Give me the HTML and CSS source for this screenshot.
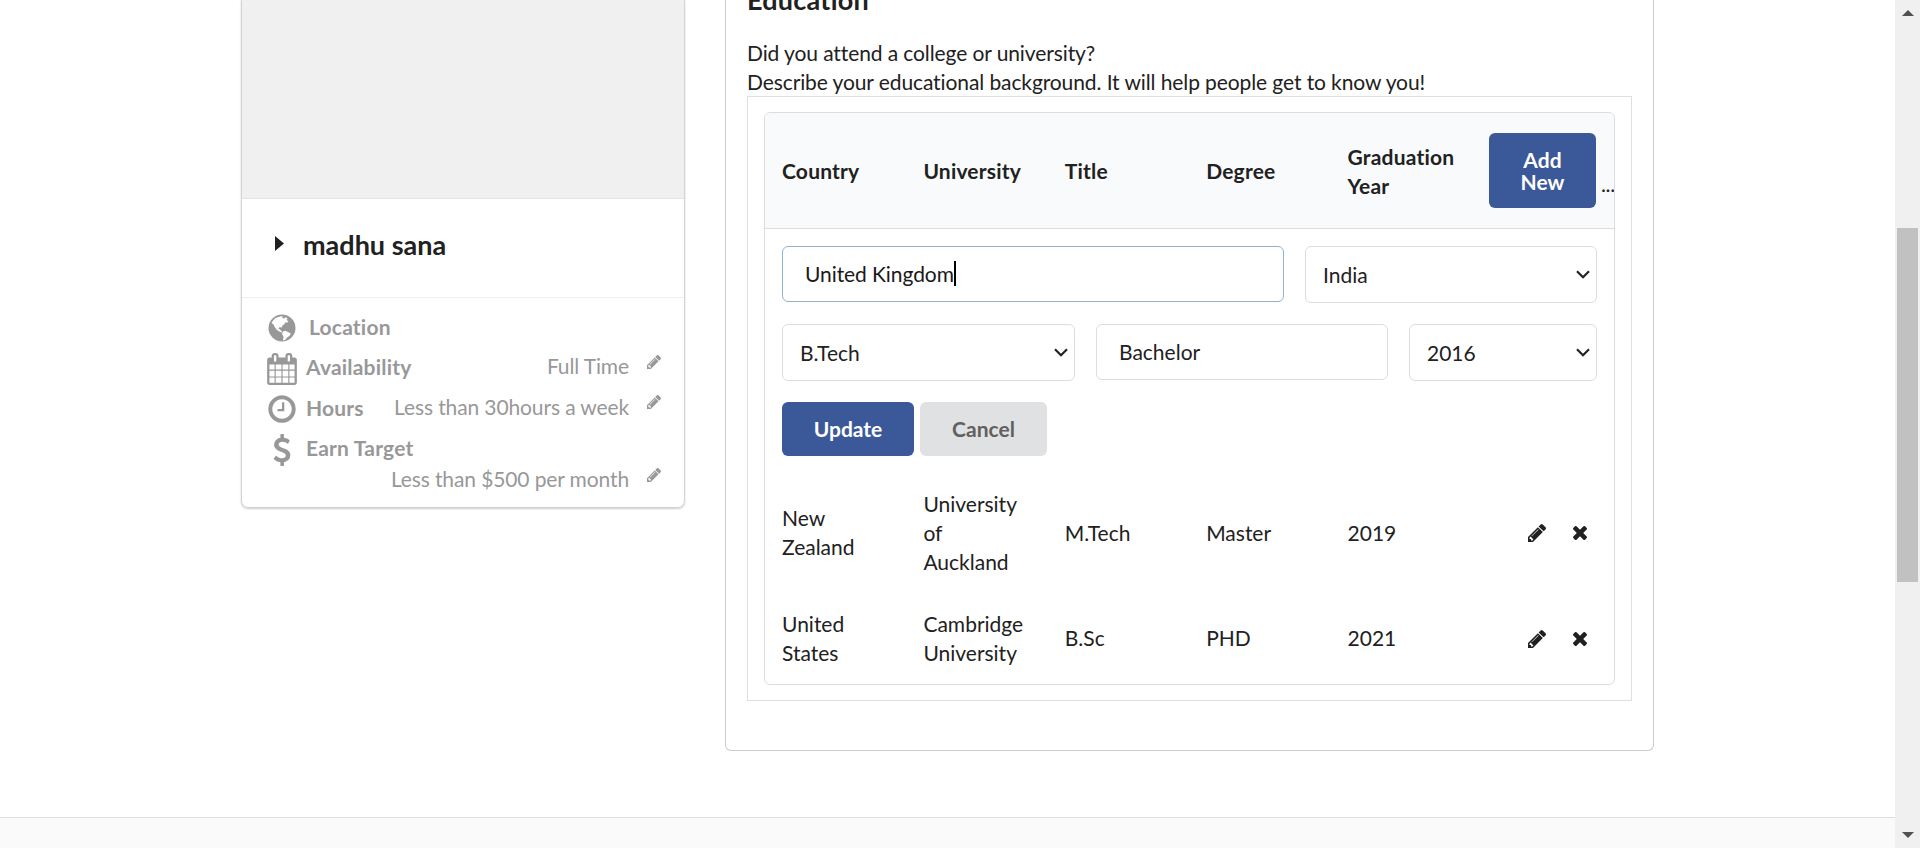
FILE: index.html
```html
<!DOCTYPE html>
<html lang="en">
<head>
<meta charset="utf-8">
<title>Profile</title>
<link rel="stylesheet" href="styles.css">
</head>
<body>
<svg class="defs" aria-hidden="true">
  <symbol id="pencil" viewBox="128 149 1515 1515"><path d="M491 1536l91-91-235-235-91 91v107h128v128h107zm523-928q0-22-22-22-10 0-17 7l-542 542q-7 7-7 17 0 22 22 22 10 0 17-7l542-542q7-7 7-17zm-54-192l416 416-832 832h-416v-416zm683 96q0 53-37 90l-166 166-416-416 166-165q36-38 90-38 53 0 91 38l235 234q37 39 37 91z"/></symbol>
  <symbol id="times" viewBox="302 366 1188 1188"><path d="M1490 1322q0 40-28 68l-136 136q-28 28-68 28t-68-28l-294-294-294 294q-28 28-68 28t-68-28l-136-136q-28-28-28-68t28-68l294-294-294-294q-28-28-28-68t28-68l136-136q28-28 68-28t68 28l294 294 294-294q28-28 68-28t68 28l136 136q28 28 28 68t-28 68l-294 294 294 294q28 28 28 68z"/></symbol>
  <symbol id="chevron" viewBox="0 0 14 9"><path d="M1 1.2 7 7.2 13 1.2" fill="none" stroke="#222" stroke-width="2.2"/></symbol>
</svg>
<div class="page">
  <div class="view">
    <div class="columns">
      <aside class="card">
        <div class="photo"></div>
        <div class="name"><svg class="caret" viewBox="0 0 9 15"><path d="M0 0 9 7.5 0 15z"/></svg><span>madhu sana</span></div>
        <div class="facts">
          <div class="fact first">
            <svg class="ic" viewBox="0 0 32 32"><circle cx="16" cy="16" r="13.5"/><path class="land" d="M7.500 8 9.500 6 12.500 5 15 4.300 17.500 4.700 15.800 6 18 6.500 19.500 5.300 21.500 6.300 20.800 8 22.500 9.500 20.800 10.800 19.300 10.300 18.500 12 16.500 13.500 15.500 15.800 13.800 15 12.500 16.500 13.800 17.500 15.300 18.800 16.500 20.800 14.200 20 11 18 9 15.500 7.500 12.500 5.500 10.800z"/><path class="land" d="M17.200 19.300 19.500 18.800 22 20 24.800 21.400 23.600 23.800 21.200 25.500 19 28 17 28.400 17.600 24.800 16 22z"/></svg>
            <b>Location</b>
          </div>
          <div class="fact">
            <svg class="ic" viewBox="0 0 1792 1792"><path d="M192 1664h288v-288h-288v288zm352 0h320v-288h-320v288zm-352-352h288v-320h-288v320zm352 0h320v-320h-320v320zm-352-384h288v-288h-288v288zm736 736h320v-288h-320v288zm-384-736h320v-288h-320v288zm768 736h288v-288h-288v288zm-384-352h320v-320h-320v320zm-352-864v-288q0-13-9.5-22.5t-22.500-9.500h-64q-13 0-22.500 9.500t-9.500 22.500v288q0 13 9.500 22.500t22.500 9.500h64q13 0 22.500-9.500t9.500-22.500zm736 864h288v-320h-288v320zm-384-384h320v-288h-320v288zm384 0h288v-288h-288v288zm32-480v-288q0-13-9.500-22.500t-22.500-9.500h-64q-13 0-22.500 9.500t-9.500 22.500v288q0 13 9.500 22.500t22.500 9.500h64q13 0 22.500-9.500t9.500-22.500zm384-64v1280q0 52-38 90t-90 38h-1408q-52 0-90-38t-38-90v-1280q0-52 38-90t90-38h128v-96q0-66 47-113t113-47h64q66 0 113 47t47 113v96h384v-96q0-66 47-113t113-47h64q66 0 113 47t47 113v96h128q52 0 90 38t38 90z"/></svg>
            <b>Availability</b><span class="value">Full Time</span><svg class="edit"><use href="#pencil"/></svg>
          </div>
          <div class="fact">
            <svg class="ic" viewBox="0 0 1792 1792"><path d="M1024 544v448q0 14-9 23t-23 9h-320q-14 0-23-9t-9-23v-64q0-14 9-23t23-9h224v-352q0-14 9-23t23-9h64q14 0 23 9t9 23zm416 352q0-148-73-273t-198-198-273-73-273 73-198 198-73 273 73 273 198 198 273 73 273-73 198-198 73-273zm224 0q0 209-103 385.500t-279.500 279.500-385.500 103-385.500-103-279.500-279.500-103-385.500 103-385.500 279.500-279.500 385.500-103 385.500 103 279.500 279.500 103 385.500z"/></svg>
            <b>Hours</b><span class="value">Less than 30hours a week</span><svg class="edit"><use href="#pencil"/></svg>
          </div>
          <div class="fact">
            <svg class="ic" viewBox="0 0 1792 1792"><path d="M1362 1185q0 153-99.500 263.500t-258.500 136.500v175q0 14-9 23t-23 9h-135q-13 0-22.500-9.500t-9.500-22.500v-175q-66-9-127.500-31t-101.500-44.500-74-48-46.500-37.500-17.500-18q-17-21-2-41l103-135q7-10 23-12 15-2 24 9l2 2q113 99 243 125 37 8 74 8 81 0 142.500-43t61.500-122q0-28-15-53t-33.500-42-58.500-37.500-66-32-80-32.500q-39-16-61.500-25t-61.500-26.500-62.500-31-56.500-35.500-53.500-42.500-43.500-49-35.500-58-21-66.500-8.500-78q0-138 98-242t255-134v-180q0-13 9.500-22.500t22.500-9.500h135q14 0 23 9t9 23v176q57 6 110.500 23t87 33.500 63.500 37.500 39 29 15 14q17 18 5 38l-81 146q-8 15-23 16-14 3-27-7-3-3-14.500-12t-39-26.500-58.500-32-74.500-26-85.500-11.500q-95 0-155 43t-60 111q0 26 8.500 48t29.500 41.500 39.500 33 56 31 60.500 27 70 27.500q53 20 81 31.500t76 35 75.500 42.500 62 50 53 63.500 31.500 76.500 13 94z"/></svg>
            <b>Earn Target</b>
          </div>
          <div class="fact extra"><span class="value">Less than $500 per month</span><svg class="edit"><use href="#pencil"/></svg></div>
        </div>
      </aside>

      <main class="panel">
        <h3>Education</h3>
        <p>Did you attend a college or university?<br>Describe your educational background. It will help people get to know you!</p>
        <div class="frame">
          <div class="table">
            <div class="row head">
              <div>Country</div><div>University</div><div>Title</div><div>Degree</div><div>Graduation Year</div>
              <div class="add"><button class="btn primary">Add<br>New</button><span class="dots">...</span></div>
            </div>
            <div class="form">
              <div class="line one">
                <div class="field text focus"><span>United Kingdom</span><i class="cursor"></i></div>
                <div class="field select"><span>India</span><svg><use href="#chevron"/></svg></div>
              </div>
              <div class="line two">
                <div class="field select"><span>B.Tech</span><svg><use href="#chevron"/></svg></div>
                <div class="field text"><span>Bachelor</span></div>
                <div class="field select"><span>2016</span><svg><use href="#chevron"/></svg></div>
              </div>
              <div class="actions"><button class="btn primary">Update</button><button class="btn plain">Cancel</button></div>
            </div>
            <div class="row tall">
              <div>New Zealand</div><div>University of Auckland</div><div>M.Tech</div><div>Master</div><div>2019</div>
              <div class="tools"><svg class="pen"><use href="#pencil"/></svg><svg class="del"><use href="#times"/></svg></div>
            </div>
            <div class="row short">
              <div>United States</div><div>Cambridge University</div><div>B.Sc</div><div>PHD</div><div>2021</div>
              <div class="tools"><svg class="pen"><use href="#pencil"/></svg><svg class="del"><use href="#times"/></svg></div>
            </div>
          </div>
        </div>
      </main>
    </div>
    <footer class="footer"></footer>
  </div>
  <div class="scrollbar">
    <svg class="arrow" viewBox="0 0 12 6"><path d="M0 6 6 0 12 6z"/></svg>
    <div class="thumb"></div>
    <svg class="arrow" viewBox="0 0 12 6"><path d="M0 0 6 6 12 0z"/></svg>
  </div>
</div>
</body>
</html>
```

FILE: styles.css
```css
* { box-sizing: border-box; }
body {
  margin: 0;
  overflow: hidden;
  background: #fff;
  color: #212121;
  font-family: Lato, "Liberation Sans", sans-serif;
  font-size: 21px;
  line-height: 29px;
  font-variant-ligatures: none;
}
svg { display: block; flex: none; fill: currentColor; }
.defs { display: none; }
.page { display: flex; height: 848px; }
.view { flex: 1; display: flex; flex-direction: column; }
.columns { display: flex; align-items: flex-start; height: 817px; padding-left: 241px; gap: 40px; }
.footer { flex: 1; background: #fafafa; border-top: 1px solid #dedede; }

/* Profile card */
.card {
  width: 444px;
  height: 508px;
  border: 1px solid #d4d4d5;
  border-top: 0;
  border-radius: 0 0 7px 7px;
  box-shadow: 0 1px 2px #ccc;
}
.photo { height: 199px; background: #f0f0f0; border-bottom: 1px solid #e4e4e4; }
.name {
  display: flex;
  height: 99px;
  padding: 29px 0 0 33px;
  border-bottom: 1px solid #efefef;
  font-size: 27px;
  font-weight: 700;
  line-height: 34px;
}
.caret { width: 9px; height: 15px; margin: 8px 19px 0 0; }
.facts { color: #989898; padding: 11px 23px 0 24px; }
.fact { display: flex; height: 40.7px; }
.fact b { padding-top: 2.400px; margin-left: 8px; letter-spacing: .2px; }
.fact.first b { padding-top: 3px; margin-left: 11px; }
.ic { width: 32px; height: 32px; margin-top: 3px; }
.land { fill: #fff; }
.value { margin-left: auto; padding-top: 1.500px; letter-spacing: -.12px; }
.edit { width: 14px; height: 14px; margin: 5px 0 0 18px; }
.extra { margin-top: -9px; }

/* Education panel */
.panel {
  width: 929px;
  height: 751px;
  padding: 0 21px;
  border: 1px solid #ccc;
  border-top: 0;
  border-radius: 0 0 6px 6px;
}
h3 { margin: -19px 0 20px; font-size: 27px; line-height: 37px; letter-spacing: .25px; }
p { margin: 0; letter-spacing: -.1px; line-height: 29.2px; }
.frame { height: 605px; padding: 15px 16px; border: 1px solid #dedfe0; }
.table { height: 573px; border: 1px solid #dcddde; border-radius: 6px; overflow: hidden; }
.row { display: grid; grid-template-columns: repeat(6, 141.4px); align-items: center; padding-bottom: 2px; }
.row > div { padding: 0 17px; }
.row > .add, .row > .tools { display: flex; }
.head { height: 116px; padding: 0; background: #f9fafb; border-bottom: 1px solid #dcddde; font-weight: 700; letter-spacing: .2px; line-height: 29.2px; }
.row > .add { align-items: flex-end; padding: 0 0 0 17px; }
.head .btn { width: 107px; height: 75px; flex: none; line-height: 21.500px; }
.dots { margin: 0 0 5px 5px; line-height: 38px; font-weight: 400; letter-spacing: -.3px; }
.btn { padding: 0; border: 0; border-radius: 6px; font: 700 21px/21px Lato, sans-serif; }
.primary { background: #3b5998; color: #fff; }
.plain { background: #e0e1e2; color: #606060; }
.form { height: 244px; padding: 17px 17px 0; }
.line { display: grid; gap: 21px; height: 57px; margin-bottom: 21px; align-items: start; }
.one { grid-template-columns: 502px 292px; }
.two { grid-template-columns: 293px 292px 188px; }
.field { display: flex; align-items: center; border: 1px solid #dcddde; border-radius: 6px; }
.text { height: 56px; padding: 0 0 2px 22px; }
.select { height: 57px; padding: 0 6px 0 17px; justify-content: space-between; }
.select svg { width: 14px; height: 9px; }
.focus { border-color: #8fb3cc; color: #191919; }
.focus span { letter-spacing: -.08px; }
.cursor { width: 2px; height: 25px; background: #000; }
.actions { display: flex; gap: 6px; }
.actions .btn { width: 132px; height: 54px; padding-bottom: 2px; }
.actions .plain { width: 127px; }
.tall { height: 120px; }
.short { height: 91px; }
.row > .tools { padding: 2px 0 0 56px; align-items: center; }
.pen { width: 18px; height: 18px; }
.del { width: 14px; height: 14px; margin-left: 27px; }

/* Browser scrollbar */
.scrollbar { display: flex; flex-direction: column; align-items: center; width: 25px; padding: 10px 0; background: #f0f0f0; }
.arrow { width: 12px; height: 6px; fill: #505050; }
.thumb { width: 21px; height: 354px; margin: 212px 0 auto; background: #c1c1c1; }
```
